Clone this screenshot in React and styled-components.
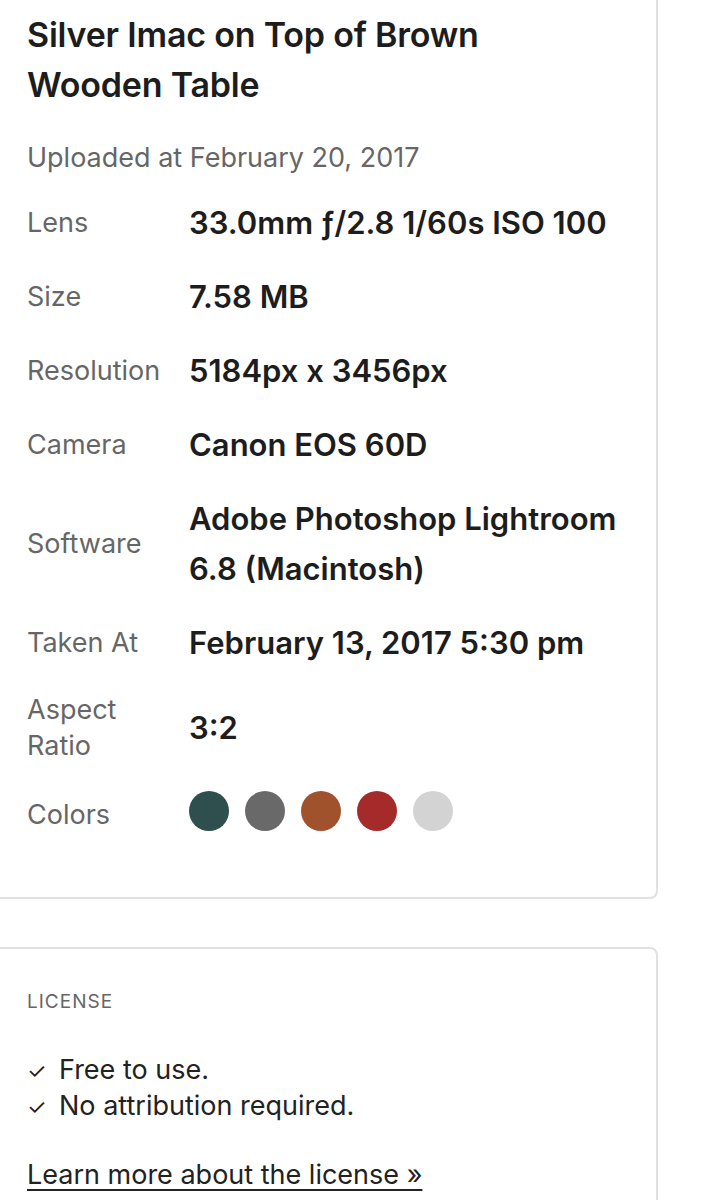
import React from "react";
import styled, { createGlobalStyle } from "styled-components";

const GlobalStyle = createGlobalStyle`
  html, body {
    margin: 0;
    padding: 0;
    background: #fff;
    overflow: hidden;
  }
  body {
    font-family: Inter, "Noto Sans", "Liberation Sans", sans-serif;
    color: #222;
    -webkit-font-smoothing: antialiased;
  }
`;

const Sidebar = styled.aside`
  width: 670px;
  margin-left: -12px;
  margin-top: -40px;
  & > * ~ * {
    margin-top: 48px;
  }
`;

const Card = styled.section`
  border: 2px solid #e1e1e1;
  border-radius: 8px;
  padding: ${({ $top }) => $top || "39px"} 26px ${({ $bottom }) => $bottom || "35px"} 37px;
`;

const Title = styled.h1`
  margin: 0;
  max-width: 580px;
  font-size: 34px;
  line-height: 50px;
  font-weight: 600;
  letter-spacing: -0.2px;
  color: #1d1d1d;
`;

const Uploaded = styled.p`
  margin: 30px 0 22px;
  font-size: 27px;
  line-height: 36px;
  color: #666;
`;

const Details = styled.dl`
  margin: 0;
  display: grid;
  grid-template-columns: 162px 1fr;
  row-gap: 24px;
  align-items: center;
`;

const Label = styled.dt`
  font-size: 27px;
  line-height: 36px;
  color: #666;
  padding-right: 16px;
  padding-top: ${({ $shift }) => $shift || 0};
`;

const Value = styled.dd`
  margin: 0;
  font-size: 31px;
  line-height: 50px;
  font-weight: 600;
  color: #1d1d1d;
`;

const Swatches = styled.dd`
  margin: 0;
  display: flex;
  gap: 16px;
`;

const Swatch = styled.span`
  width: 40px;
  height: 40px;
  border-radius: 50%;
  background: ${({ $color }) => $color};
`;

const Overline = styled.h3`
  margin: 0 0 36px;
  font-size: 19px;
  line-height: 28px;
  font-weight: 400;
  letter-spacing: 1px;
  color: #666;
`;

const Checks = styled.ul`
  margin: 0;
  padding: 0;
  list-style: none;
`;

const Check = styled.li`
  font-size: 27px;
  line-height: 36px;
  height: 36px;
  color: #222;
  &::before {
    content: "✓";
    display: inline-block;
    width: 32px;
    font-size: 22px;
    line-height: 0;
  }
`;

const MoreLink = styled.a`
  display: inline-block;
  margin-top: 33px;
  font-size: 27px;
  line-height: 36px;
  color: #222;
  text-decoration: underline;
  text-underline-offset: 5px;
  text-decoration-thickness: 2px;
`;

const details = [
  ["Lens", "33.0mm ƒ/2.8 1/60s ISO 100"],
  ["Size", "7.58 MB"],
  ["Resolution", "5184px x 3456px"],
  ["Camera", "Canon EOS 60D"],
  ["Software", "Adobe Photoshop Lightroom 6.8 (Macintosh)"],
  ["Taken At", "February 13, 2017 5:30 pm"],
  ["Aspect Ratio", "3:2"],
];

const colors = ["#2f4f4f", "#696969", "#a0522d", "#a52a2a", "#d3d3d3"];

export default function App() {
  return (
    <>
      <GlobalStyle />
      <Sidebar>
        <Card $top="48px" $bottom="64px">
          <Title>Silver Imac on Top of Brown Wooden Table</Title>
          <Uploaded>Uploaded at February 20, 2017</Uploaded>
          <Details>
            {details.map(([label, value]) => (
              <React.Fragment key={label}>
                <Label>{label}</Label>
                <Value>{value}</Value>
              </React.Fragment>
            ))}
            <Label $shift="9px">Colors</Label>
            <Swatches>
              {colors.map((c) => (
                <Swatch key={c} $color={c} />
              ))}
            </Swatches>
          </Details>
        </Card>
        <Card>
          <Overline>LICENSE</Overline>
          <Checks>
            <Check>Free to use.</Check>
            <Check>No attribution required.</Check>
          </Checks>
          <MoreLink href="#">Learn more about the license »</MoreLink>
        </Card>
      </Sidebar>
    </>
  );
}
